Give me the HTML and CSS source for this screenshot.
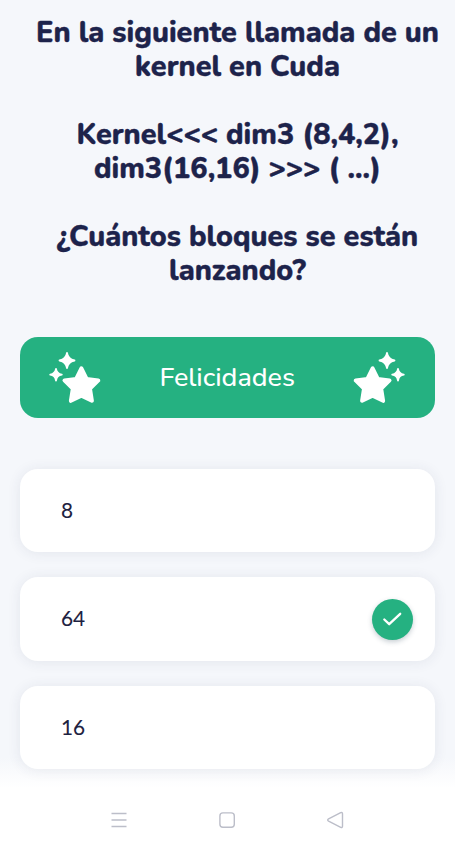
FILE: index.html
```html
<!DOCTYPE html>
<html lang="es">
<head>
<meta charset="utf-8">
<title>Quiz</title>
<link rel="stylesheet" href="styles.css">
</head>
<body>
<main class="quiz">
  <h1 class="question">
    <span class="line">En la siguiente llamada de un</span>
    <span class="line">kernel en Cuda</span>
    <span class="line gap">Kernel&lt;&lt;&lt; dim3 (8,4,2),</span>
    <span class="line">dim3(16,16) &gt;&gt;&gt; ( ...)</span>
    <span class="line gap">¿Cuántos bloques se están</span>
    <span class="line">lanzando?</span>
  </h1>
  <div class="banner">
    <svg class="stars" viewBox="0 0 52 54" width="52" height="54">
      <path class="star" d="M32.4 17.4 37.6 27.9 49.3 29.4 41 37.7 42.9 49.8 32.4 44.8 21.9 49.8 23.8 37.7 15.5 29.4 27.2 27.9Z"/>
      <path class="spark" d="M18 2Q19 8.5 25.5 9.5Q19 10.5 18 17Q17 10.5 10.5 9.5Q17 8.5 18 2ZM7 18Q7.8 22.9 12.8 23.7Q7.8 24.5 7 29.5Q6.2 24.5 1.2 23.7Q6.2 22.9 7 18Z"/>
    </svg>
    <span class="cheer">Felicidades</span>
    <svg class="stars mirrored" viewBox="0 0 52 54" width="52" height="54">
      <path class="star" d="M32.4 17.4 37.6 27.9 49.3 29.4 41 37.7 42.9 49.8 32.4 44.8 21.9 49.8 23.8 37.7 15.5 29.4 27.2 27.9Z"/>
      <path class="spark" d="M18 2Q19 8.5 25.5 9.5Q19 10.5 18 17Q17 10.5 10.5 9.5Q17 8.5 18 2ZM7 18Q7.8 22.9 12.8 23.7Q7.8 24.5 7 29.5Q6.2 24.5 1.2 23.7Q6.2 22.9 7 18Z"/>
    </svg>
  </div>
  <ul class="answers">
    <li class="answer"><span class="value">8</span></li>
    <li class="answer"><span class="value">64</span>
      <span class="correct"><svg viewBox="0 0 40 40" width="40" height="40"><path d="M12.3 20.5 17.2 25.2 28.2 14.8"/></svg></span>
    </li>
    <li class="answer"><span class="value">16</span></li>
  </ul>
</main>
<nav class="system">
  <svg viewBox="0 0 18 18" width="18" height="18"><path d="M1.5 2.5H16.5M1.5 9H16.5M1.5 15.5H16.5"/></svg>
  <svg viewBox="0 0 18 18" width="18" height="18"><rect x="1.9" y="1.9" width="14.4" height="14.4" rx="3"/></svg>
  <svg viewBox="0 0 18 18" width="18" height="18"><path d="M14.7 1.7 2.6 7.9Q.8 9 2.6 10.1L14.7 16.3Q16.5 17 16.5 15.2V2.8Q16.5 1 14.7 1.7Z"/></svg>
</nav>
</body>
</html>
```

FILE: styles.css
```css
* { box-sizing: border-box; }
body {
  margin: 0;
  height: 848px;
  overflow: hidden;
  display: flex;
  flex-direction: column;
  background: linear-gradient(#f5f7fb 0 758px, #fff 788px);
  color: #1d234b;
}
.quiz { padding: 16px 20px 0; }
.question {
  margin: 0 0 0 20px;
  height: 321px;
  display: flex;
  flex-direction: column;
  align-items: center;
  font: 800 28.8px/34px "Nunito", "Open Sans", sans-serif;
  -webkit-text-stroke: .4px #1d234b;
}
.line { white-space: pre; margin: 0 -20px; }
.gap { margin-top: 34px; }
.banner {
  height: 81px;
  border-radius: 18px;
  background: #25b181;
  color: #fff;
  display: flex;
  align-items: center;
  justify-content: space-between;
  padding: 0 29.5px 0 29px;
}
.cheer { font: 500 26.9px/34px "Nunito", "Noto Sans", sans-serif; padding-bottom: 2px; }
.stars { fill: #fff; }
.star { stroke: #fff; stroke-width: 4; stroke-linejoin: round; }
.spark { stroke: #fff; stroke-width: 1.8; stroke-linejoin: round; }
.mirrored { transform: scaleX(-1); }
.answers {
  list-style: none;
  margin: 51px 0 0;
  padding: 0;
  display: grid;
  gap: 25.2px;
}
.answer {
  height: 83.3px;
  padding: 0 22px 0 41px;
  display: flex;
  align-items: center;
  justify-content: space-between;
  border-radius: 18px;
  background: #fff;
  box-shadow: 0 1px 14px rgba(45, 50, 90, .09);
  font: 400 20.8px/28px "Lato", sans-serif;
  color: #1d2140;
}
.value { padding-bottom: 2px; -webkit-text-stroke: .1px #1d2140; }
.correct {
  width: 41px;
  height: 41px;
  border-radius: 50%;
  background: #25b181;
  box-shadow: 0 2px 5px rgba(30, 60, 80, .25);
}
.correct svg { display: block; fill: none; stroke: #fff; stroke-width: 2.3; stroke-linecap: round; stroke-linejoin: round; }
.system {
  margin-top: auto;
  height: 56px;
  padding: 0 111px 0 109.5px;
  display: flex;
  align-items: center;
  justify-content: space-between;
}
.system svg { fill: none; stroke: #bcbec9; stroke-width: 1.4; }
```
